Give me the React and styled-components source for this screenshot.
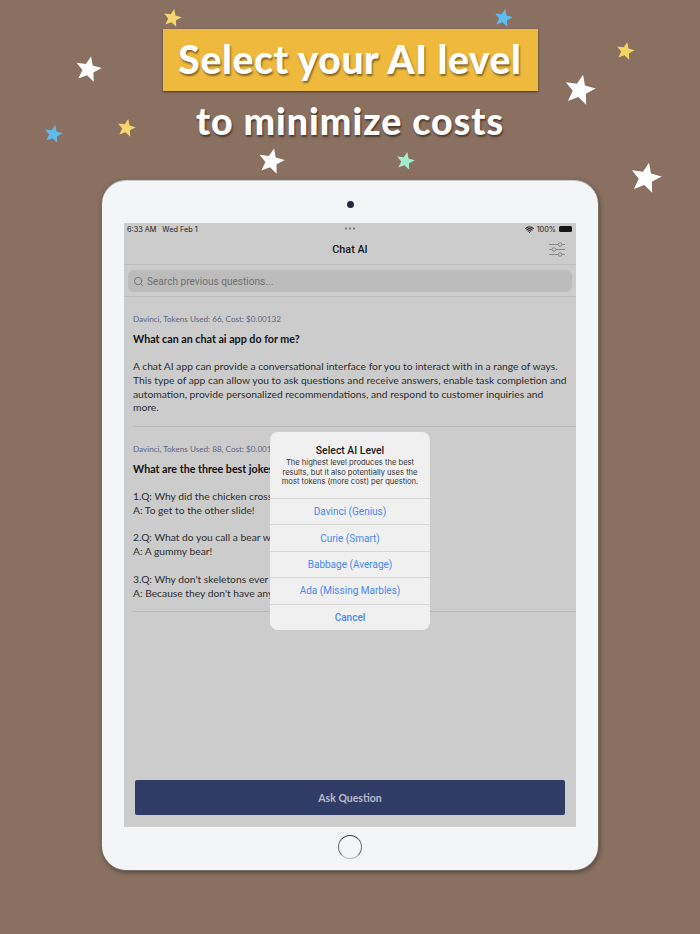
import styled, { createGlobalStyle } from "styled-components";
import { Search, Wifi } from "lucide-react";

const GlobalStyle = createGlobalStyle`
    html, body {
        margin: 0;
        padding: 0;
        background: #8a7060;
    }
`

const Page = styled.div`
    position: relative;
    width: 700px;
    height: 934px;
    overflow: hidden;
    display: flex;
    flex-direction: column;
    align-items: center;
    padding-top: 29px;
    box-sizing: border-box;
    background: #8a7060;
    font-family: "Lato", "Liberation Sans", sans-serif;
`

const Banner = styled.div`
    width: 375px;
    height: 62px;
    padding-bottom: 2px;
    box-sizing: border-box;
    display: flex;
    align-items: center;
    justify-content: center;
    background: #eeb93c;
    box-shadow: 0 1px 2px rgba(50, 35, 20, 0.75);
    color: white;
    font-size: 39px;
    font-weight: 900;
    letter-spacing: 0.6px;
    text-shadow: 1px 2px 2px rgba(70, 50, 20, 0.65);
`

const Tagline = styled.div`
    height: 60px;
    line-height: 60px;
    color: white;
    font-size: 37.5px;
    font-weight: 900;
    letter-spacing: 1px;
    text-shadow: 1px 2px 2px rgba(50, 35, 25, 0.7);
`

const StarIcon = styled.svg`
    position: absolute;
    left: ${props => props.x - props.size / 2}px;
    top: ${props => props.y - props.size / 2}px;
    width: ${props => props.size}px;
    height: ${props => props.size}px;
    transform: rotate(12deg);
`

const Star = ({ x, y, size, color }) => (
    <StarIcon x={x} y={y} size={size} viewBox="0 0 24 24">
        <polygon fill={color} points="12,1 15.1,8.6 23.4,9.2 17,14.5 19,22.6 12,18.2 5,22.6 7,14.5 0.6,9.2 8.9,8.6" />
    </StarIcon>
)

const Tablet = styled.div`
    position: relative;
    width: 496px;
    height: 690px;
    margin-top: 29px;
    box-sizing: border-box;
    padding: 42px 22px 0;
    background: #f4f5f7;
    border-radius: 24px;
    border-top: 1px solid #c9cacc;
    box-shadow: 0 0 1px 1px #77726e, 1px 2px 5px rgba(45, 35, 28, 0.7);
`

const Camera = styled.span`
    position: absolute;
    top: 20px;
    left: 50%;
    width: 7px;
    height: 7px;
    margin-left: -3.5px;
    border-radius: 50%;
    background: #24283a;
`

const HomeButton = styled.span`
    position: absolute;
    top: 654px;
    left: 50%;
    width: 24px;
    height: 24px;
    margin-left: -12px;
    box-sizing: border-box;
    border-radius: 50%;
    border: 1px solid #6e6e70;
    border-bottom-color: #b5b5b7;
    border-top-color: #333336;
`

const Screen = styled.div`
    position: relative;
    width: 452px;
    height: 604px;
    display: flex;
    flex-direction: column;
    background: #cccccc;
    color: #1e1e1e;
`

const StatusBar = styled.div`
    position: relative;
    height: 12px;
    padding: 0 3px;
    display: flex;
    align-items: center;
    justify-content: space-between;
    font-family: "Inter", "Liberation Sans", sans-serif;
    font-size: 7.3px;
    color: #222;
`

const StatusGroup = styled.div`
    display: flex;
    align-items: center;
    gap: ${props => props.gap || 3}px;
`

const Dots = styled.span`
    position: absolute;
    left: 50%;
    top: 4px;
    margin-left: -6px;
    width: 12px;
    height: 3px;
    background: radial-gradient(circle at center, #777 1px, transparent 1.2px) 0 0 / 4px 3px repeat-x;
`

const Battery = styled.span`
    width: 13px;
    height: 6px;
    border-radius: 1.5px;
    background: #151515;
    margin-right: 1px;
`

const NavBar = styled.div`
    position: relative;
    height: 29px;
    display: flex;
    align-items: center;
    justify-content: center;
    border-bottom: 1px solid #bdbdbd;
    font-family: "Roboto", "Liberation Sans", sans-serif;
    font-size: 10.8px;
    font-weight: 500;
    color: #161616;
`

const FilterIcon = styled.svg`
    position: absolute;
    right: 11px;
    top: 7px;
    width: 16px;
    height: 15px;
`

const SearchArea = styled.div`
    height: 32px;
    padding: 5px 4px 0;
    box-sizing: border-box;
    border-bottom: 1px solid #bebebe;
`

const SearchField = styled.div`
    height: 22px;
    padding-left: 5px;
    display: flex;
    align-items: center;
    gap: 3px;
    background: #bcbcbc;
    border-radius: 6px;
    color: #707070;
    font-family: "Roboto", "Liberation Sans", sans-serif;
    font-size: 10.1px;
`

const Item = styled.div`
    margin-left: 9px;
    padding-top: 15px;
    height: ${props => props.height}px;
    box-sizing: border-box;
    border-bottom: 1px solid #b9b9b9;
`

const Meta = styled.div`
    height: 14px;
    line-height: 14px;
    font-size: 8.15px;
    color: #5c6484;
`

const Question = styled.div`
    margin-top: 6px;
    line-height: 14px;
    font-size: 10.7px;
    font-weight: 700;
    color: #111;
`

const Answer = styled.div`
    margin-top: 14px;
    padding-right: 8px;
    line-height: 13.8px;
    font-size: 10.28px;
    color: #2c2c2c;
    white-space: pre-line;
`

const AskButton = styled.div`
    margin: auto 11px 12px;
    height: 35px;
    display: flex;
    align-items: center;
    justify-content: center;
    background: #303c66;
    border-radius: 2px;
    color: #b9bcc8;
    font-size: 10.5px;
    font-weight: 700;
`

const Dialog = styled.div`
    position: absolute;
    top: 209px;
    left: 146px;
    width: 160px;
    height: 198px;
    display: flex;
    flex-direction: column;
    background: #f0f0f0;
    border-radius: 8px;
    font-family: "Roboto", "Liberation Sans", sans-serif;
    overflow: hidden;
`

const DialogHead = styled.div`
    height: 66px;
    padding-top: 13px;
    box-sizing: border-box;
    text-align: center;
`

const DialogTitle = styled.div`
    line-height: 12px;
    font-size: 10.4px;
    font-weight: 500;
    color: #1a1a1a;
`

const DialogText = styled.div`
    margin-top: 1px;
    line-height: 9.5px;
    font-family: "Inter", "Liberation Sans", sans-serif;
    font-size: 7.6px;
    color: #333;
`

const DialogAction = styled.div`
    flex: 1;
    display: flex;
    align-items: center;
    justify-content: center;
    border-top: 1px solid #d6d6d6;
    color: #4a88ee;
    font-size: 10px;
    font-weight: ${props => props.strong ? 500 : 400};
`

const stars = [
    { x: 172, y: 17, size: 19, color: "#f6d66e" },
    { x: 503, y: 17, size: 19, color: "#5dbdf2" },
    { x: 88, y: 68, size: 27, color: "#ffffff" },
    { x: 625, y: 50, size: 19, color: "#f4d462" },
    { x: 580, y: 89, size: 32, color: "#ffffff" },
    { x: 126, y: 127, size: 19, color: "#f6d66e" },
    { x: 53, y: 133, size: 19, color: "#5dbdf2" },
    { x: 271, y: 160, size: 27, color: "#ffffff" },
    { x: 405, y: 160, size: 19, color: "#a2eccb" },
    { x: 646, y: 177, size: 32, color: "#ffffff" },
];

const levels = ["Davinci (Genius)", "Curie (Smart)", "Babbage (Average)", "Ada (Missing Marbles)"];

export default function App() {
    return (
        <Page>
            <GlobalStyle />
            {stars.map(star => <Star key={star.x} {...star} />)}
            <Banner>Select your AI level</Banner>
            <Tagline>to minimize costs</Tagline>
            <Tablet>
                <Camera />
                <Screen>
                    <StatusBar>
                        <StatusGroup gap={6}>
                            <span>6:33 AM</span>
                            <span>Wed Feb 1</span>
                        </StatusGroup>
                        <Dots />
                        <StatusGroup>
                            <Wifi size={9} strokeWidth={3} />
                            <span>100%</span>
                            <Battery />
                        </StatusGroup>
                    </StatusBar>
                    <NavBar>
                        Chat AI
                        <FilterIcon viewBox="0 0 16 15" fill="none" stroke="#808080" strokeWidth="0.9">
                            <path d="M0 2.5H9M13 2.5H16M0 7.5H3M7 7.5H16M0 12.5H9M13 12.5H16" />
                            <circle cx="11" cy="2.5" r="1.8" />
                            <circle cx="5" cy="7.5" r="1.8" />
                            <circle cx="11" cy="12.5" r="1.8" />
                        </FilterIcon>
                    </NavBar>
                    <SearchArea>
                        <SearchField>
                            <Search size={11} color="#707070" />
                            Search previous questions...
                        </SearchField>
                    </SearchArea>
                    <Item height={130}>
                        <Meta>Davinci, Tokens Used: 66, Cost: $0.00132</Meta>
                        <Question>What can an chat ai app do for me?</Question>
                        <Answer>A chat AI app can provide a conversational interface for you to interact with in a range of ways. This type of app can allow you to ask questions and receive answers, enable task completion and automation, provide personalized recommendations, and respond to customer inquiries and more.</Answer>
                    </Item>
                    <Item height={185}>
                        <Meta>Davinci, Tokens Used: 88, Cost: $0.00176</Meta>
                        <Question>What are the three best jokes?</Question>
                        <Answer>{`1.Q: Why did the chicken cross the road?
A: To get to the other slide!

2.Q: What do you call a bear with no teeth?
A: A gummy bear!

3.Q: Why don't skeletons ever go trick or treating?
A: Because they don't have any body to go with.`}</Answer>
                    </Item>
                    <AskButton>Ask Question</AskButton>
                    <Dialog>
                        <DialogHead>
                            <DialogTitle>Select AI Level</DialogTitle>
                            <DialogText>
                                The highest level produces the best<br />
                                results, but it also potentially uses the<br />
                                most tokens (more cost) per question.
                            </DialogText>
                        </DialogHead>
                        {levels.map(level => <DialogAction key={level}>{level}</DialogAction>)}
                        <DialogAction strong>Cancel</DialogAction>
                    </Dialog>
                </Screen>
                <HomeButton />
            </Tablet>
        </Page>
    )
}
